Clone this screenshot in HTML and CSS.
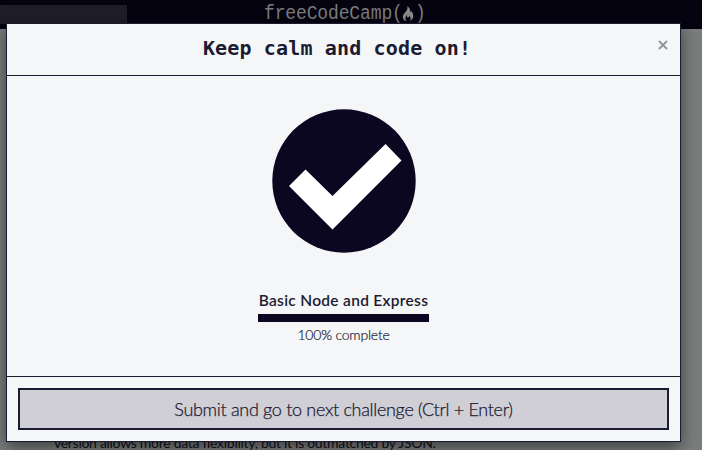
FILE: index.html
```html
<!DOCTYPE html>
<html lang="en">
<head>
<meta charset="utf-8">
<title>freeCodeCamp</title>
<link rel="stylesheet" href="styles.css">
</head>
<body>
<div class="page">
  <header class="navbar">
    <div class="search"></div>
    <div class="logo">
      <span class="name">freeCodeCamp</span><span class="paren">(</span><svg class="flame" viewBox="0 0 12 16" width="12" height="16"><path d="M5.2 0C8 2 8.4 4.2 8.1 6.3C8.8 6 9.1 5.4 9.1 4.8C11.2 7.2 12.1 10.2 10.5 12.8C9.9 13.8 9 14.6 7.8 15.2C9.3 13.1 8.7 11.3 7.2 9.7C7.2 10.9 6.6 11.5 5.8 11.5C4.8 11.5 4.8 10.4 5.3 9C3.2 10.7 2.8 13.2 4.6 15.4C1.8 14.4.4 12.4 1 9.7C1.7 6.6 6.6 4.8 5.2 0Z"/></svg><span class="paren">)</span>
    </div>
  </header>
  <main class="article"><p>version allows more data flexibility, but it is outmatched by JSON.</p></main>
</div>
<div class="overlay">
  <section class="modal" role="dialog">
    <header class="modal-header">
      <h1>Keep calm and code on!</h1>
      <button class="close" aria-label="Close"><svg viewBox="0 0 10 10" width="10" height="10"><path d="M1 1L9 9M9 1L1 9"/></svg></button>
    </header>
    <div class="modal-body">
      <svg class="check" viewBox="0 0 144 144" width="144" height="144"><circle cx="72" cy="72" r="71.7"/><path d="M17 77L33.5 60.5L60.5 87L113.5 35L129.5 51.5L60.5 120.5Z"/></svg>
      <div class="completion">
        <h2>Basic Node and Express</h2>
        <div class="bar"></div>
        <p>100% complete</p>
      </div>
    </div>
    <footer class="modal-footer"><button class="submit">Submit and go to next challenge (Ctrl + Enter)</button></footer>
  </section>
</div>
</body>
</html>
```
FILE: styles.css
```css
* { box-sizing: border-box; }
body { margin: 0; font-family: Lato, sans-serif; color: #1b1b32; overflow: hidden; }
h1, h2, p { margin: 0; }
.page { height: 450px; background: #7b7d7c; display: flex; flex-direction: column; overflow: hidden; }
.navbar { height: 29px; flex: none; background: #05030f; display: flex; align-items: flex-start; }
.search { width: 127px; height: 19px; margin-top: 5px; background: #1f1e28; }
.logo { margin-left: 137px; height: 26px; display: flex; align-items: center; color: #7c7c80; font: 18px/26px "Liberation Mono", monospace; letter-spacing: -0.13px; white-space: nowrap; }
.name, .paren { transform: scaleY(1.15); }
.paren { width: 10px; }
.flame { fill: #8b8b8e; margin: 1px 1px 0 0; }
.article { flex: 1; display: flex; align-items: flex-end; padding-left: 54px; color: #0e0e19; font-size: 14px; line-height: 16px; }
.article p { white-space: nowrap; letter-spacing: -0.29px; margin-bottom: -1px; }
.overlay { position: absolute; inset: 0; padding: 23px 21px 8px 6px; }
.modal { height: 419px; background: #f5f6f7; border: 1px solid #1b1b32; box-shadow: 0 5px 15px rgba(0,0,0,.5); display: flex; flex-direction: column; }
.modal-header { height: 52px; border-bottom: 1px solid #1b1b32; display: flex; align-items: flex-start; }
.modal-header h1 { flex: 1; padding: 10px 0 0 9px; text-align: center; font: bold 20px/28px "DejaVu Sans Mono", monospace; letter-spacing: .15px; }
.close { width: 10px; height: 10px; margin: 16px 12px 0 0; padding: 0; border: 0; background: none; }
.close svg { display: block; fill: none; stroke: #92929d; stroke-width: 1.8; }
.modal-body { height: 301px; border-bottom: 1px solid #1b1b32; display: flex; flex-direction: column; align-items: center; padding-top: 33px; }
.check { flex: none; fill: #0b0720; }
.check path { fill: #fff; }
.completion { width: 171px; margin-top: 37px; text-align: center; }
.completion h2 { font-size: 15.5px; font-weight: 600; line-height: 20px; white-space: nowrap; letter-spacing: .3px; }
.bar { height: 8px; margin-top: 4px; background: #0b0720; }
.completion p { font-size: 14px; font-weight: 300; line-height: 20px; margin-top: 3px; letter-spacing: -.2px; -webkit-text-stroke: .2px #1b1b32; }
.modal-footer { padding: 11px; }
.submit { display: block; width: 100%; height: 42px; padding: 0; border: 2px solid #1b1b32; background: #d0cfd5; color: #1b1b32; font: 300 18px Lato, sans-serif; letter-spacing: -.31px; -webkit-text-stroke: .25px #1b1b32; }
```
